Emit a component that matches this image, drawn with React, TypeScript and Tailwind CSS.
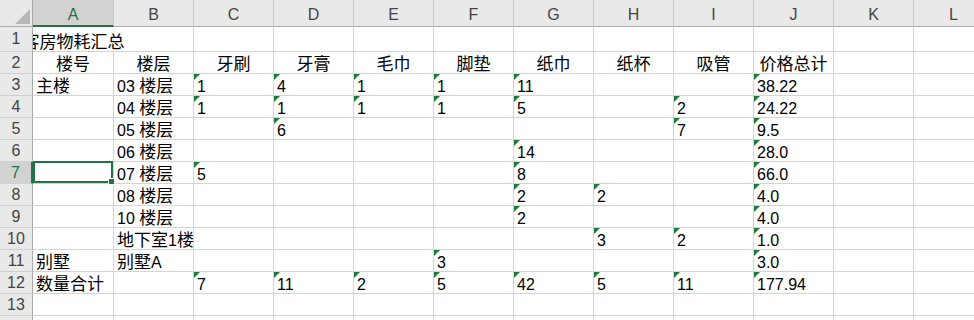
import React from "react";

type Row = string[];

const COLS = ["A", "B", "C", "D", "E", "F", "G", "H", "I", "J", "K", "L"];
const COL_W = ["w-[81px]", "w-[80px]", "w-[80px]", "w-[80px]", "w-[80px]", "w-[80px]", "w-[80px]", "w-[80px]", "w-[80px]", "w-[80px]", "w-[80px]", "w-[80px]"];

// "*" prefix marks a number stored as text (green indicator in the corner)
const BODY: Row[] = [
  ["主楼", "03 楼层", "*1", "*4", "*1", "*1", "*11", "", "", "*38.22"],
  ["", "04 楼层", "*1", "*1", "*1", "*1", "*5", "", "*2", "*24.22"],
  ["", "05 楼层", "", "*6", "", "", "", "", "*7", "*9.5"],
  ["", "06 楼层", "", "", "", "", "*14", "", "", "*28.0"],
  ["", "07 楼层", "*5", "", "", "", "*8", "", "", "*66.0"],
  ["", "08 楼层", "", "", "", "", "*2", "*2", "", "*4.0"],
  ["", "10 楼层", "", "", "", "", "*2", "", "", "*4.0"],
  ["", "地下室1楼", "", "", "", "", "", "*3", "*2", "*1.0"],
  ["别墅", "别墅A", "", "", "", "*3", "", "", "", "*3.0"],
  ["数量合计", "", "*7", "*11", "*2", "*5", "*42", "*5", "*11", "*177.94"],
  [],
];

const HEADINGS = ["楼号", "楼层", "牙刷", "牙膏", "毛巾", "脚垫", "纸巾", "纸杯", "吸管", "价格总计"];

// CJK glyphs render a touch larger than the Latin digits
function Txt({ s }: { s: string }) {
  const parts = s.split(/([\u4e00-\u9fff]+)/).filter(Boolean);
  return (
    <>
      {parts.map((p, i) =>
        /[\u4e00-\u9fff]/.test(p) ? (
          <span key={i} className="text-[17px]">
            {p}
          </span>
        ) : (
          <span key={i}>{p}</span>
        )
      )}
    </>
  );
}

function Flag() {
  return (
    <svg className="absolute left-0 top-0" width="6" height="6" viewBox="0 0 6 6">
      <polygon points="0,0 6,0 0,6" fill="#1d7a3c" />
    </svg>
  );
}

function RowHead({ n, sel, h }: { n?: number; sel?: boolean; h: string }) {
  return (
    <div
      className={`${h} w-[33px] shrink-0 relative z-10 flex items-center justify-center border-b border-[#cfcfcf] text-[16px] ${
        sel ? "bg-[#d2d2d2] text-[#217346] border-r-2 border-r-[#217346]" : "bg-[#e9e9e9] text-[#444] border-r border-r-[#ababab]"
      }`}
    >
      {n}
    </div>
  );
}

function Cell({
  v,
  w,
  center,
  noRight,
  children,
}: {
  v: string;
  w: string;
  center?: boolean;
  noRight?: boolean;
  children?: React.ReactNode;
}) {
  const flag = v.startsWith("*");
  const text = flag ? v.slice(1) : v;
  return (
    <div
      className={`${w} h-full shrink-0 relative flex items-end whitespace-nowrap leading-[17px] text-[16px] text-black border-b border-[#d4d4d4] ${
        noRight ? "" : "border-r"
      } ${center ? "justify-center" : "pl-[3px]"}`}
    >
      {flag && <Flag />}
      {text && (
        <span>
          <Txt s={text} />
        </span>
      )}
      {children}
    </div>
  );
}

export default function App() {
  return (
    <div
      className="w-[974px] h-[320px] overflow-hidden bg-white flex flex-col"
      style={{ fontFamily: '"Liberation Sans", "Noto Sans CJK SC", sans-serif' }}
    >
      {/* column letters */}
      <div className="flex h-[27px] shrink-0">
        <div className="w-[33px] shrink-0 relative bg-[#e9e9e9] border-r border-b border-[#ababab]">
          <svg className="absolute right-[2px] bottom-[2px]" width="15" height="15" viewBox="0 0 15 15">
            <polygon points="15,0 15,15 0,15" fill="#b7b7b7" />
          </svg>
        </div>
        {COLS.map((c, i) => (
          <div
            key={c}
            className={`${COL_W[i]} shrink-0 flex items-end justify-center leading-[17px] text-[16px] border-r border-r-[#c8c8c8] ${
              i === 0
                ? "bg-[#d2d2d2] text-[#217346] border-b-2 border-b-[#217346]"
                : "bg-[#e9e9e9] text-[#444] border-b border-b-[#ababab]"
            }`}
          >
            <span className={i === 0 ? "pb-[2px]" : "pb-[3px]"}>{c}</span>
          </div>
        ))}
      </div>

      {/* row 1: title */}
      <div className="flex h-[25px] shrink-0">
        <RowHead n={1} h="h-full" />
        {COLS.map((c, i) => (
          <Cell key={c} v={i === 0 ? "客房物耗汇总" : ""} w={COL_W[i]} center={i === 0} noRight={i === 0} />
        ))}
      </div>

      {/* row 2: headings */}
      <div className="flex h-[22px] shrink-0">
        <RowHead n={2} h="h-full" />
        {COLS.map((c, i) => (
          <Cell key={c} v={HEADINGS[i] ?? ""} w={COL_W[i]} center={i < HEADINGS.length} />
        ))}
      </div>

      {/* rows 3-13 */}
      {BODY.map((r, ri) => {
        const n = ri + 3;
        return (
          <div key={n} className="flex h-[22px] shrink-0">
            <RowHead n={n} sel={n === 7} h="h-full" />
            {COLS.map((c, i) => (
              <Cell key={c} v={r[i] ?? ""} w={COL_W[i]}>
                {n === 7 && i === 0 && (
                  <div className="absolute -top-[1px] left-0 right-0 bottom-0 z-20 border-2 border-[#217346]">
                    <div className="absolute -right-[4px] -bottom-[4px] w-[7px] h-[7px] bg-[#217346] border border-white" />
                  </div>
                )}
              </Cell>
            ))}
          </div>
        );
      })}

      {/* next row, only its top edge shows */}
      <div className="flex h-[22px] shrink-0">
        <RowHead h="h-full" />
        {COLS.map((c, i) => (
          <Cell key={c} v="" w={COL_W[i]} />
        ))}
      </div>
    </div>
  );
}
